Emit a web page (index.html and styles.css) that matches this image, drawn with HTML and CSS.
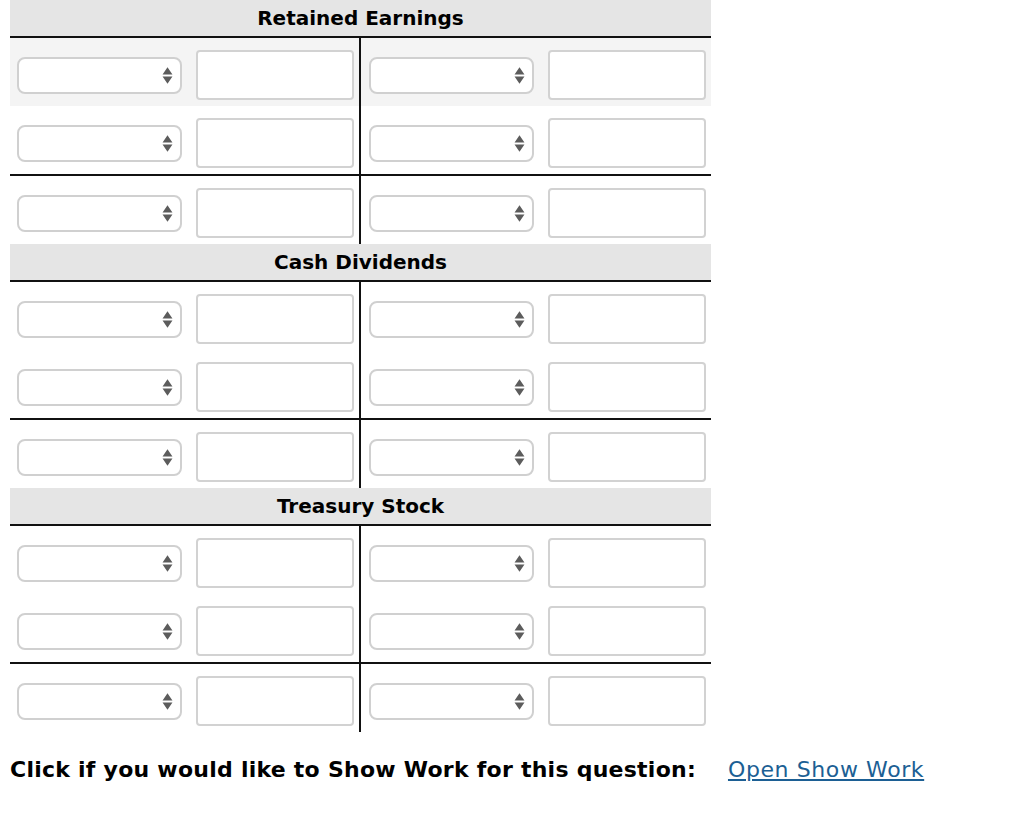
FILE: index.html
```html
<!DOCTYPE html>
<html lang="en">
<head>
<meta charset="utf-8">
<title>T-Accounts</title>
<link rel="stylesheet" href="styles.css">
</head>
<body>
<div class="ledger">
  <section class="account">
    <div class="acct-head">Retained Earnings</div>
    <div class="row shaded">
      <div class="cell left"><span class="sel"><select></select><svg class="arr" viewBox="0 0 10 16"><path d="M5 0.5 L9.5 7 H0.5Z M5 15.5 L9.5 9 H0.5Z"/></svg></span><input type="text"></div>
      <div class="cell right"><span class="sel"><select></select><svg class="arr" viewBox="0 0 10 16"><path d="M5 0.5 L9.5 7 H0.5Z M5 15.5 L9.5 9 H0.5Z"/></svg></span><input type="text"></div>
    </div>
    <div class="row">
      <div class="cell left"><span class="sel"><select></select><svg class="arr" viewBox="0 0 10 16"><path d="M5 0.5 L9.5 7 H0.5Z M5 15.5 L9.5 9 H0.5Z"/></svg></span><input type="text"></div>
      <div class="cell right"><span class="sel"><select></select><svg class="arr" viewBox="0 0 10 16"><path d="M5 0.5 L9.5 7 H0.5Z M5 15.5 L9.5 9 H0.5Z"/></svg></span><input type="text"></div>
    </div>
    <div class="row total">
      <div class="cell left"><span class="sel"><select></select><svg class="arr" viewBox="0 0 10 16"><path d="M5 0.5 L9.5 7 H0.5Z M5 15.5 L9.5 9 H0.5Z"/></svg></span><input type="text"></div>
      <div class="cell right"><span class="sel"><select></select><svg class="arr" viewBox="0 0 10 16"><path d="M5 0.5 L9.5 7 H0.5Z M5 15.5 L9.5 9 H0.5Z"/></svg></span><input type="text"></div>
    </div>
  </section>
  <section class="account">
    <div class="acct-head">Cash Dividends</div>
    <div class="row">
      <div class="cell left"><span class="sel"><select></select><svg class="arr" viewBox="0 0 10 16"><path d="M5 0.5 L9.5 7 H0.5Z M5 15.5 L9.5 9 H0.5Z"/></svg></span><input type="text"></div>
      <div class="cell right"><span class="sel"><select></select><svg class="arr" viewBox="0 0 10 16"><path d="M5 0.5 L9.5 7 H0.5Z M5 15.5 L9.5 9 H0.5Z"/></svg></span><input type="text"></div>
    </div>
    <div class="row">
      <div class="cell left"><span class="sel"><select></select><svg class="arr" viewBox="0 0 10 16"><path d="M5 0.5 L9.5 7 H0.5Z M5 15.5 L9.5 9 H0.5Z"/></svg></span><input type="text"></div>
      <div class="cell right"><span class="sel"><select></select><svg class="arr" viewBox="0 0 10 16"><path d="M5 0.5 L9.5 7 H0.5Z M5 15.5 L9.5 9 H0.5Z"/></svg></span><input type="text"></div>
    </div>
    <div class="row total">
      <div class="cell left"><span class="sel"><select></select><svg class="arr" viewBox="0 0 10 16"><path d="M5 0.5 L9.5 7 H0.5Z M5 15.5 L9.5 9 H0.5Z"/></svg></span><input type="text"></div>
      <div class="cell right"><span class="sel"><select></select><svg class="arr" viewBox="0 0 10 16"><path d="M5 0.5 L9.5 7 H0.5Z M5 15.5 L9.5 9 H0.5Z"/></svg></span><input type="text"></div>
    </div>
  </section>
  <section class="account">
    <div class="acct-head">Treasury Stock</div>
    <div class="row">
      <div class="cell left"><span class="sel"><select></select><svg class="arr" viewBox="0 0 10 16"><path d="M5 0.5 L9.5 7 H0.5Z M5 15.5 L9.5 9 H0.5Z"/></svg></span><input type="text"></div>
      <div class="cell right"><span class="sel"><select></select><svg class="arr" viewBox="0 0 10 16"><path d="M5 0.5 L9.5 7 H0.5Z M5 15.5 L9.5 9 H0.5Z"/></svg></span><input type="text"></div>
    </div>
    <div class="row">
      <div class="cell left"><span class="sel"><select></select><svg class="arr" viewBox="0 0 10 16"><path d="M5 0.5 L9.5 7 H0.5Z M5 15.5 L9.5 9 H0.5Z"/></svg></span><input type="text"></div>
      <div class="cell right"><span class="sel"><select></select><svg class="arr" viewBox="0 0 10 16"><path d="M5 0.5 L9.5 7 H0.5Z M5 15.5 L9.5 9 H0.5Z"/></svg></span><input type="text"></div>
    </div>
    <div class="row total">
      <div class="cell left"><span class="sel"><select></select><svg class="arr" viewBox="0 0 10 16"><path d="M5 0.5 L9.5 7 H0.5Z M5 15.5 L9.5 9 H0.5Z"/></svg></span><input type="text"></div>
      <div class="cell right"><span class="sel"><select></select><svg class="arr" viewBox="0 0 10 16"><path d="M5 0.5 L9.5 7 H0.5Z M5 15.5 L9.5 9 H0.5Z"/></svg></span><input type="text"></div>
    </div>
  </section>
</div>
<p class="showwork">Click if you would like to Show Work for this question:<a class="link" href="#">Open Show Work</a></p>
</body>
</html>
```
FILE: styles.css
```css
html, body {
  margin: 0;
  padding: 0;
  background: #fff;
}
body {
  padding: 0 10px;
  font-family: "DejaVu Sans", Verdana, sans-serif;
  color: #000;
}
.ledger {
  width: 701px;
}
.account {
  display: block;
}
.acct-head {
  height: 36px;
  background: #e5e5e5;
  border-bottom: 2px solid #111;
  font-weight: bold;
  font-size: 20px;
  line-height: 37px;
  text-align: center;
}
.row {
  display: grid;
  grid-template-columns: 351px 350px;
  height: 68px;
}
.row.shaded {
  background: #f4f4f4;
}
.row.total {
  border-top: 2px solid #111;
}
.cell {
  display: flex;
  align-items: flex-start;
  gap: 14px;
  padding-top: 12px;
  box-sizing: border-box;
}
.cell.left {
  padding-left: 7px;
  border-right: 2px solid #111;
}
.cell.right {
  padding-left: 8px;
}
.sel {
  position: relative;
  display: block;
  width: 165px;
  height: 37px;
  margin-top: 7px;
}
.sel select {
  -webkit-appearance: none;
  appearance: none;
  display: block;
  width: 165px;
  height: 37px;
  box-sizing: border-box;
  border: 2px solid #d0d0d0;
  border-radius: 8px;
  background: #fff;
  margin: 0;
  padding: 0;
}
.arr {
  position: absolute;
  left: 145px;
  top: 9px;
  width: 11px;
  height: 19px;
  fill: #5c5c5c;
}
.cell input {
  display: block;
  width: 158px;
  height: 50px;
  box-sizing: border-box;
  border: 2px solid #d2d2d2;
  border-radius: 4px;
  background: #fff;
  margin: 0;
  padding: 0 6px;
}
.showwork {
  margin: 25px 0 0;
  font-weight: bold;
  font-size: 22px;
  letter-spacing: 0.25px;
  line-height: 26px;
}
.link {
  margin-left: 32px;
  font-weight: normal;
  letter-spacing: 0.6px;
  color: #1c5f94;
  text-decoration: underline;
  text-underline-offset: 2px;
}
```
